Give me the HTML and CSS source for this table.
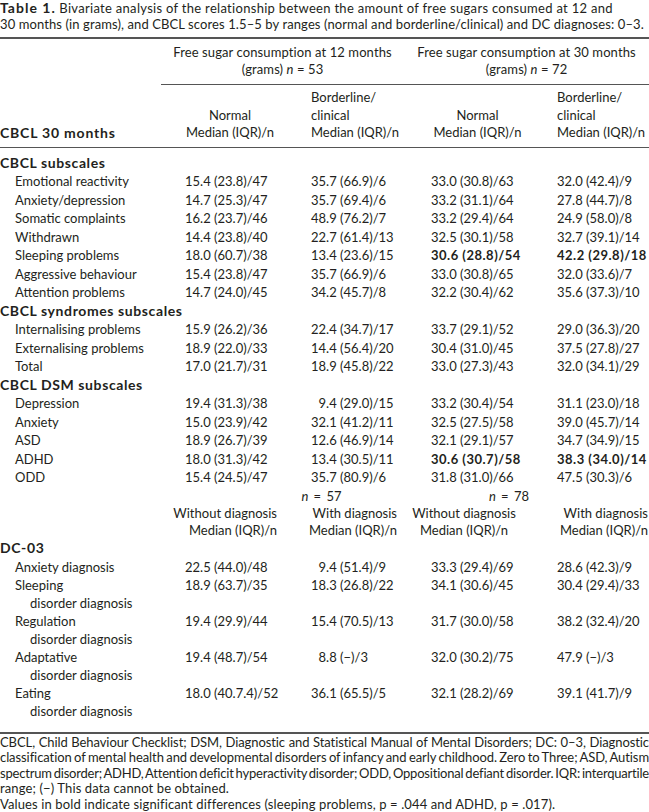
FILE: index.html
```html
<!DOCTYPE html>
<html lang="en">
<head>
<meta charset="utf-8">
<title>Table 1</title>
<link rel="stylesheet" href="styles.css">
</head>
<body>
<div class="page">
  <p class="caption"><span class="cap-line first-line"><b>Table 1.</b> Bivariate analysis of the relationship between the amount of free sugars consumed at 12 and</span><span class="cap-line tight">30 months (in grams), and CBCL scores 1.5–5 by ranges (normal and borderline/clinical) and DC diagnoses: 0–3.</span></p>
  <table class="data">
    <colgroup>
      <col class="w-label"><col class="w-c1"><col class="w-c2"><col class="w-c3"><col class="w-c4">
    </colgroup>
    <thead>
      <tr class="group">
        <th></th>
        <th colspan="2" class="grp grp1"><div class="grp-inner">Free sugar consumption at 12 months<br>(grams) <i>n</i> = 53</div></th>
        <th colspan="2" class="grp grp2"><div class="grp-inner">Free sugar consumption at 30 months<br>(grams) <i>n</i> = 72</div></th>
      </tr>
      <tr class="sub">
        <th class="lab-head">CBCL 30 months</th>
        <th class="h1">Normal<br>Median (IQR)/n</th>
        <th class="h2">Borderline/<br>clinical<br>Median (IQR)/n</th>
        <th class="h3">Normal<br>Median (IQR)/n</th>
        <th class="h4">Borderline/<br>clinical<br>Median (IQR)/n</th>
      </tr>
    </thead>
    <tbody>
      <tr class="section first"><th colspan="5">CBCL subscales</th></tr>
      <tr><td class="lab">Emotional reactivity</td><td>15.4 (23.8)/47</td><td>35.7 (66.9)/6</td><td>33.0 (30.8)/63</td><td>32.0 (42.4)/9</td></tr>
      <tr><td class="lab">Anxiety/depression</td><td>14.7 (25.3)/47</td><td>35.7 (69.4)/6</td><td>33.2 (31.1)/64</td><td>27.8 (44.7)/8</td></tr>
      <tr><td class="lab">Somatic complaints</td><td>16.2 (23.7)/46</td><td>48.9 (76.2)/7</td><td>33.2 (29.4)/64</td><td>24.9 (58.0)/8</td></tr>
      <tr><td class="lab">Withdrawn</td><td>14.4 (23.8)/40</td><td>22.7 (61.4)/13</td><td>32.5 (30.1)/58</td><td>32.7 (39.1)/14</td></tr>
      <tr><td class="lab">Sleeping problems</td><td>18.0 (60.7)/38</td><td>13.4 (23.6)/15</td><td class="sig">30.6 (28.8)/54</td><td class="sig">42.2 (29.8)/18</td></tr>
      <tr><td class="lab">Aggressive behaviour</td><td>15.4 (23.8)/47</td><td>35.7 (66.9)/6</td><td>33.0 (30.8)/65</td><td>32.0 (33.6)/7</td></tr>
      <tr><td class="lab">Attention problems</td><td>14.7 (24.0)/45</td><td>34.2 (45.7)/8</td><td>32.2 (30.4)/62</td><td>35.6 (37.3)/10</td></tr>
      <tr class="section"><th colspan="5">CBCL syndromes subscales</th></tr>
      <tr><td class="lab">Internalising problems</td><td>15.9 (26.2)/36</td><td>22.4 (34.7)/17</td><td>33.7 (29.1)/52</td><td>29.0 (36.3)/20</td></tr>
      <tr><td class="lab">Externalising problems</td><td>18.9 (22.0)/33</td><td>14.4 (56.4)/20</td><td>30.4 (31.0)/45</td><td>37.5 (27.8)/27</td></tr>
      <tr><td class="lab">Total</td><td>17.0 (21.7)/31</td><td>18.9 (45.8)/22</td><td>33.0 (27.3)/43</td><td>32.0 (34.1)/29</td></tr>
      <tr class="section"><th colspan="5">CBCL DSM subscales</th></tr>
      <tr><td class="lab">Depression</td><td>19.4 (31.3)/38</td><td><span class="fig">&#8199;</span>9.4 (29.0)/15</td><td>33.2 (30.4)/54</td><td>31.1 (23.0)/18</td></tr>
      <tr><td class="lab">Anxiety</td><td>15.0 (23.9)/42</td><td>32.1 (41.2)/11</td><td>32.5 (27.5)/58</td><td>39.0 (45.7)/14</td></tr>
      <tr><td class="lab">ASD</td><td>18.9 (26.7)/39</td><td>12.6 (46.9)/14</td><td>32.1 (29.1)/57</td><td>34.7 (34.9)/15</td></tr>
      <tr><td class="lab">ADHD</td><td>18.0 (31.3)/42</td><td>13.4 (30.5)/11</td><td class="sig">30.6 (30.7)/58</td><td class="sig">38.3 (34.0)/14</td></tr>
      <tr><td class="lab">ODD</td><td>15.4 (24.5)/47</td><td>35.7 (80.9)/6</td><td>31.8 (31.0)/66</td><td>47.5 (30.3)/6</td></tr>
      <tr class="nrow"><td></td><td colspan="2" class="n1"><i>n</i> = 57</td><td colspan="2" class="n2"><i>n</i> = 78</td></tr>
      <tr class="dhead">
        <td></td>
        <td class="d1">Without diagnosis<br>Median (IQR)/n</td>
        <td class="d2">With diagnosis<br>Median (IQR)/n</td>
        <td class="d3">Without diagnosis<br>Median (IQR)/n</td>
        <td class="d4">With diagnosis<br>Median (IQR)/n</td>
      </tr>
      <tr class="section"><th colspan="5">DC-03</th></tr>
      <tr><td class="lab">Anxiety diagnosis</td><td>22.5 (44.0)/48</td><td><span class="fig">&#8199;</span>9.4 (51.4)/9</td><td>33.3 (29.4)/69</td><td>28.6 (42.3)/9</td></tr>
      <tr class="two"><td class="lab">Sleeping<span class="cont">disorder diagnosis</span></td><td>18.9 (63.7)/35</td><td>18.3 (26.8)/22</td><td>34.1 (30.6)/45</td><td>30.4 (29.4)/33</td></tr>
      <tr class="two"><td class="lab">Regulation<span class="cont">disorder diagnosis</span></td><td>19.4 (29.9)/44</td><td>15.4 (70.5)/13</td><td>31.7 (30.0)/58</td><td>38.2 (32.4)/20</td></tr>
      <tr class="two"><td class="lab">Adaptative<span class="cont">disorder diagnosis</span></td><td>19.4 (48.7)/54</td><td><span class="fig">&#8199;</span>8.8 (−)/3</td><td>32.0 (30.2)/75</td><td>47.9 (−)/3</td></tr>
      <tr class="two last"><td class="lab">Eating<span class="cont">disorder diagnosis</span></td><td>18.0 (40.7.4)/52</td><td>36.1 (65.5)/5</td><td>32.1 (28.2)/69</td><td>39.1 (41.7)/9</td></tr>
    </tbody>
  </table>
  <div class="notes">
    <p><span class="line l1">CBCL, Child Behaviour Checklist; DSM, Diagnostic and Statistical Manual of Mental Disorders; DC: 0–3, Diagnostic</span><span class="line l2">classification of mental health and developmental disorders of infancy and early childhood. Zero to Three; ASD, Autism</span><span class="line l3">spectrum disorder; ADHD, Attention deficit hyperactivity disorder; ODD, Oppositional defiant disorder. IQR: interquartile</span><span class="line end">range; (−) This data cannot be obtained.</span></p>
    <p><span class="line end">Values in bold indicate significant differences (sleeping problems, p = .044 and ADHD, p = .017).</span></p>
  </div>
</div>
</body>
</html>
```

FILE: styles.css
```css
html, body {
  margin: 0;
  padding: 0;
  background: #ffffff;
}

body {
  font-family: "Lato", "Open Sans", sans-serif;
  color: #231f20;
  font-size: 13px;
}

.page {
  width: 649px;
}

/* caption */
.caption {
  margin: 0;
  font-size: 13px;
  line-height: 16px;
}

.cap-line {
  display: block;
  white-space: nowrap;
}

.cap-line.first-line {
  letter-spacing: 0.3px;
}

.cap-line.tight {
  letter-spacing: 0.1px;
}

.caption b {
  font-weight: 700;
  font-size: 14px;
  letter-spacing: 1px;
}

/* table */
.data {
  width: 649px;
  table-layout: fixed;
  border-collapse: collapse;
  border-spacing: 0;
  margin-top: 5px;
  border-top: 2px solid #555555;
  border-bottom: 2px solid #555555;
}

.w-label { width: 165px; }
.w-c1 { width: 140px; }
.w-c2 { width: 99px; }
.w-c3 { width: 145px; }
.w-c4 { width: 100px; }

.data th,
.data td {
  padding: 0;
  font-weight: 400;
  text-align: left;
  vertical-align: top;
  white-space: nowrap;
}

/* group header */
.group th {
  line-height: 17px;
  padding-top: 5px;
  text-align: center;
  vertical-align: top;
  letter-spacing: 0.1px;
}

.grp1 { padding-right: 6px; }
.grp2 { padding-left: 5px; }

.grp-inner {
  padding-bottom: 6px;
  border-bottom: 1.5px solid #555555;
}

.grp1 .grp-inner { margin-left: -4px; }

/* sub header */
.sub th {
  line-height: 17.5px;
  padding-top: 4px;
  padding-bottom: 5px;
  vertical-align: bottom;
  border-bottom: 1.5px solid #555555;
}

.data .sub .lab-head {
  font-weight: 700;
  font-size: 14px;
  letter-spacing: 0.8px;
}

.sub .h1 { text-align: center; padding-left: 20px; padding-right: 30px; }
.sub .h2 { padding-left: 6px; }
.sub .h3 { text-align: center; padding-left: 27px; padding-right: 25px; }
.sub .h4 { padding-left: 8px; }

/* body rows */
tbody tr { line-height: 18.5px; }

tbody td:nth-child(2) { padding-left: 20px; }
tbody td:nth-child(3) { padding-left: 6px; }
tbody td:nth-child(4) { padding-left: 27px; }
tbody td:nth-child(5) { padding-left: 8px; }

.data td.lab { padding-left: 15px; }

.data .section th {
  font-weight: 700;
  font-size: 14px;
  letter-spacing: 0.6px;
}

.data .section.first th { padding-top: 6px; }

.data td.sig {
  font-weight: 700;
  letter-spacing: 0.5px;
}

.cont {
  display: block;
  padding-left: 15px;
}

.two { line-height: 18px; }
.data .last td { padding-bottom: 12px; }

/* n = rows */
.data td.n1 { text-align: center; padding-left: 74px; word-spacing: 2px; }
.data td.n2 { text-align: center; padding-left: 0; padding-right: 35px; word-spacing: 2px; }

.dhead { line-height: 17px; }
.data td.d1 { text-align: right; padding-left: 0; padding-right: 28px; }
.data td.d2 { text-align: right; padding-left: 0; padding-right: 7px; }
.data td.d3 { text-align: center; padding-left: 0; padding-right: 25px; }
.data td.d4 { text-align: right; padding-left: 0; padding-right: 1px; }

/* notes */
.notes {
  margin-top: 1px;
  font-size: 13px;
  line-height: 15.4px;
}

.notes p {
  margin: 0;
}

.notes .line {
  display: block;
  text-align: justify;
  text-align-last: justify;
}

.notes .l1 {
  letter-spacing: -0.08px;
}

.notes .l2 {
  letter-spacing: -0.08px;
  word-spacing: -1px;
}

.notes .l3 {
  letter-spacing: -0.2px;
  word-spacing: -1.5px;
}

.notes .line.end {
  text-align: left;
  text-align-last: left;
  letter-spacing: 0.12px;
}
```
